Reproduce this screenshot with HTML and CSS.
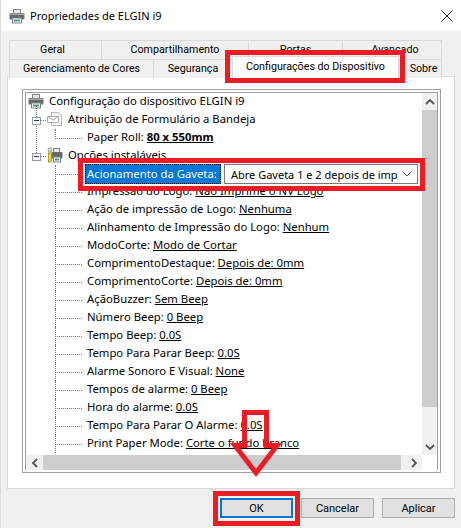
FILE: index.html
```html
<!DOCTYPE html>
<html lang="pt">
<head>
<meta charset="utf-8">
<title>Propriedades de ELGIN i9</title>
<link rel="stylesheet" href="styles.css">
</head>
<body>
<div class="window">
  <header class="titlebar">
    <svg class="printer title-icon" viewBox="0 0 16 16"><rect x="4.500" y="1.500" width="7" height="4" fill="#e8e8e8" stroke="#808080"/><rect x="0.500" y="5" width="15" height="6.500" rx="1" fill="#6a6a6a"/><rect x="1" y="5.500" width="14" height="1.500" fill="#a5a5a5"/><rect x="3.500" y="10" width="9" height="5" fill="#fff" stroke="#808080"/><rect x="5" y="11.500" width="3" height="2" fill="#1f9fd0"/><rect x="8" y="11.500" width="3" height="2" fill="#39b54a"/></svg>
    <span class="title">Propriedades de ELGIN i9</span>
    <svg class="close" viewBox="0 0 12 12"><path d="M.5.5l11 11M11.500.5l-11 11" stroke="#222" fill="none"/></svg>
  </header>
  <main class="dialog">
    <div class="tabs">
      <div class="tabrow row-top">
        <div class="tab first">Geral</div><div class="tab">Compartilhamento</div><div class="tab">Portas</div><div class="tab far">Avançado</div>
      </div>
      <div class="tabrow row-bottom">
        <div class="tab">Gerenciamento de Cores</div><div class="tab">Segurança</div><div class="tab active">Configurações do Dispositivo</div><div class="tab far">Sobre</div>
      </div>
    </div>
    <section class="panel">
      <div class="frame">
        <div class="inner">
          <div class="tree">
            <div class="row lvl0">
              <svg class="printer node-icon" viewBox="0 0 16 16"><rect x="4.500" y="1.500" width="7" height="4" fill="#e8e8e8" stroke="#808080"/><rect x="0.500" y="5" width="15" height="6.500" rx="1" fill="#6a6a6a"/><rect x="1" y="5.500" width="14" height="1.500" fill="#a5a5a5"/><rect x="3.500" y="10" width="9" height="5" fill="#fff" stroke="#808080"/><rect x="5" y="11.500" width="3" height="2" fill="#1f9fd0"/><rect x="8" y="11.500" width="3" height="2" fill="#39b54a"/></svg>
              <span>Configuração do dispositivo ELGIN i9</span>
            </div>
            <div class="row lvl1 branch-form">
              <span class="toggle"></span>
              <svg class="node-icon" viewBox="0 0 16 16"><path d="M4.500 1.500h7l3 3v10h-10z" fill="#fbfbfb" stroke="#b5b5b5"/><path d="M.5 5.500h11v6H.5z" fill="#fff" stroke="#aaa"/><path d="M.5 5.500l5.500 3.500 5.500-3.500" fill="none" stroke="#aaa"/></svg>
              <span>Atribuição de Formulário a Bandeja</span>
            </div>
            <div class="row lvl2 last-form"><span>Paper Roll: <b class="val">80 x 550mm</b></span></div>
            <div class="row lvl1 branch-opt">
              <span class="toggle"></span>
              <svg class="node-icon" viewBox="0 0 16 16"><rect x="6.500" y="1.500" width="6" height="4" fill="#e8e8e8" stroke="#808080"/><rect x="4.500" y="5" width="11" height="6.500" rx="1" fill="#6a6a6a"/><rect x="6.500" y="10" width="7" height="5" fill="#fff" stroke="#808080"/><rect x="8" y="11.500" width="2" height="2" fill="#1f9fd0"/><rect x="10" y="11.500" width="2" height="2" fill="#39b54a"/><rect x="1.500" y="6" width="3" height="9" fill="#f2df2a" stroke="#8a7d10" stroke-width=".7"/><circle cx="3" cy="3" r="2" fill="#e5d9b0" stroke="#777" stroke-width=".7"/></svg>
              <span>Opções instaláveis</span>
            </div>
            <div class="row lvl2 opt">
              <span class="selected">Acionamento da Gaveta:</span>
              <div class="combo"><span class="combo-text">Abre Gaveta 1 e 2 depois de imp</span><svg class="chev" viewBox="0 0 10 6"><path d="M.5.5L5 5 9.500.5" fill="none" stroke="#555"/></svg></div>
            </div>
            <div class="row lvl2 opt"><span>Impressão do Logo: <u>Não Imprime o NV Logo</u></span></div>
            <div class="row lvl2 opt"><span>Ação de impressão de Logo: <u>Nenhuma</u></span></div>
            <div class="row lvl2 opt"><span>Alinhamento de Impressão do Logo: <u>Nenhum</u></span></div>
            <div class="row lvl2 opt"><span>ModoCorte: <u>Modo de Cortar</u></span></div>
            <div class="row lvl2 opt"><span>ComprimentoDestaque: <u>Depois de: 0mm</u></span></div>
            <div class="row lvl2 opt"><span>ComprimentoCorte: <u>Depois de: 0mm</u></span></div>
            <div class="row lvl2 opt"><span>AçãoBuzzer: <u>Sem Beep</u></span></div>
            <div class="row lvl2 opt"><span>Número Beep: <u>0 Beep</u></span></div>
            <div class="row lvl2 opt"><span>Tempo Beep: <u>0.0S</u></span></div>
            <div class="row lvl2 opt"><span>Tempo Para Parar Beep: <u>0.0S</u></span></div>
            <div class="row lvl2 opt"><span>Alarme Sonoro E Visual: <u>None</u></span></div>
            <div class="row lvl2 opt"><span>Tempos de alarme: <u>0 Beep</u></span></div>
            <div class="row lvl2 opt"><span>Hora do alarme: <u>0.0S</u></span></div>
            <div class="row lvl2 opt"><span>Tempo Para Parar O Alarme: <u>0.0S</u></span></div>
            <div class="row lvl2 opt"><span>Print Paper Mode: <u>Corte o fundo branco</u></span></div>
          </div>
          <div class="vscroll">
            <div class="sbtn"><svg class="arrow" viewBox="0 0 10 6"><path d="M1 5l4-4 4 4" fill="none" stroke="#555" stroke-width="1.800"/></svg></div>
            <div class="vthumb"></div>
            <div class="vrest"></div>
            <div class="sbtn"><svg class="arrow" viewBox="0 0 10 6"><path d="M1 1l4 4 4-4" fill="none" stroke="#555" stroke-width="1.800"/></svg></div>
          </div>
          <div class="hscroll">
            <div class="sbtn"><svg class="arrow" viewBox="0 0 6 10"><path d="M5 1L1 5l4 4" fill="none" stroke="#555" stroke-width="1.800"/></svg></div>
            <div class="hthumb"></div>
            <div class="hrest"></div>
            <div class="sbtn"><svg class="arrow" viewBox="0 0 6 10"><path d="M1 1l4 4-4 4" fill="none" stroke="#555" stroke-width="1.800"/></svg></div>
          </div>
          <div class="corner"></div>
        </div>
      </div>
    </section>
    <footer class="buttons">
      <button class="btn default">OK</button>
      <button class="btn">Cancelar</button>
      <button class="btn">Aplicar</button>
    </footer>
  </main>
  <div class="mark mark-tab"></div>
  <div class="mark mark-combo"></div>
  <div class="mark mark-ok"></div>
  <svg class="mark-arrow" viewBox="0 0 461 528"><polygon points="244.500,412.500 266.500,412.500 266.500,445.500 277,445.500 256,473 235,445.500 244.500,445.500" fill="none" stroke="#ed1c24" stroke-width="5"/></svg>
</div>
</body>
</html>
```
FILE: styles.css
```css
* { box-sizing: border-box; }
html, body { margin: 0; padding: 0; }
body { font-family: "Noto Sans", sans-serif; font-size: 11.3px; color: #000; background: #f0f0f0; }
.window { position: relative; width: 461px; height: 528px; overflow: hidden; border-left: 1px solid #dcdcdc; }
.titlebar { height: 31px; background: #fff; display: flex; align-items: center; padding: 0 8px; }
.title-icon { width: 16px; height: 16px; flex: none; }
.title { margin-left: 5px; font-size: 11px; flex: 1; }
.close { width: 12px; height: 12px; }
.dialog { padding: 9px 6px 0; }
.tabs { padding-left: 2px; width: 435px; font-family: Roboto, sans-serif; font-size: 10.7px; }
.tabrow { display: grid; height: 18px; }
.row-top { grid-template-columns: 92px 147px 94px 100px; height: 19px; }
.row-bottom { grid-template-columns: 144px 79px 167px 43px; }
.tab { border: 1px solid #d9d9d9; border-right: 0; border-bottom: 0; background: #f0f0f0; display: flex; align-items: center; justify-content: center; white-space: nowrap; padding-bottom: 1px; }
.tab:last-child { border-right: 1px solid #d9d9d9; }
.first { padding-right: 6px; }
.far { padding-left: 6px; }
.active { background: #fff; margin-top: -3px; height: 22px; position: relative; border-right: 1px solid #d9d9d9; padding-bottom: 2px; }
.panel { height: 413px; background: #fff; border: 1px solid #d9d9d9; padding: 12px 13px 0 14px; margin-top: -1px; }
.frame { height: 384px; border: 1px solid #a0a0a0; padding: 2px; }
.inner { height: 378px; border: 1px solid #a0a0a0; background: #fff; display: grid; grid-template-columns: 396px 15px; grid-template-rows: 362px 15px; }
.tree { overflow: hidden; background: #fff; }
.row { position: relative; height: 18px; padding-bottom: 3px; display: flex; align-items: center; white-space: nowrap; }
.lvl0 { padding-left: 2px; }
.lvl1 { padding-left: 21px; }
.lvl2 { padding-left: 61px; }
.node-icon { width: 16px; height: 16px; flex: none; margin-right: 5px; }
.toggle { position: absolute; left: 6px; top: 6px; width: 9px; height: 8px; border: 1px solid #8f9bb0; background: #fff; z-index: 1; }
.toggle::after { content: ""; position: absolute; left: 1px; top: 2px; width: 5px; height: 1px; background: #1f3a6e; }
.lvl1::before { content: ""; position: absolute; left: 10px; top: -6px; height: 18px; border-left: 1px dotted #777; }
.lvl1::after { content: ""; position: absolute; left: 10px; width: 10px; top: 9px; border-top: 1px dotted #777; }
.branch-opt::before { top: -24px; height: 36px; }
.lvl2::before { content: ""; position: absolute; left: 29px; top: 0; height: 18px; border-left: 1px dotted #777; }
.lvl2::after { content: ""; position: absolute; left: 29px; width: 27px; top: 9px; border-top: 1px dotted #777; }
.last-form::before { height: 10px; }
.val { font-weight: 700; text-decoration: underline; }
.selected { background: #0078d7; color: #fff; outline: 1px dotted #111; outline-offset: -1px; height: 20px; line-height: 19px; padding: 0 3px 0 2px; margin: 3px 0 0 -2px; width: 136px; flex: none; }
.combo { margin: 3px 0 0 3px; width: 194px; height: 20px; border: 1px solid #7a7a7a; background: #fff; display: flex; align-items: center; padding: 0 5px 0 6px; justify-content: space-between; font-size: 11px; }
.chev { width: 10px; height: 6px; }
.vscroll { grid-column: 2; grid-row: 1; background: #f0f0f0; display: flex; flex-direction: column; }
.hscroll { grid-column: 1; grid-row: 2; background: #f0f0f0; display: flex; }
.corner { background: #fff; }
.sbtn { flex: none; width: 15px; height: 15px; display: flex; align-items: center; justify-content: center; }
.vscroll .sbtn { height: 17px; }
.hscroll .sbtn { width: 17px; }
.arrow { width: 10px; height: 6px; }
.hscroll .arrow { width: 6px; height: 10px; }
.vthumb { height: 297px; background: #cdcdcd; flex: none; }
.vrest { flex: 1; }
.hthumb { width: 358px; background: #cdcdcd; flex: none; }
.hrest { flex: 1; }
.buttons { display: flex; gap: 8px; justify-content: flex-end; padding-top: 9px; }
.btn { width: 73px; height: 20px; padding: 0; font-family: Roboto, sans-serif; font-size: 11px; background: #e1e1e1; border: 1px solid #adadad; color: #000; }
.default { border: 2px solid #0078d7; }
.mark { position: absolute; border: 5px solid #ed1c24; }
.mark-tab { left: 224px; top: 50px; width: 180px; height: 33px; }
.mark-combo { left: 77px; top: 158px; width: 347px; height: 33px; }
.mark-ok { left: 212px; top: 491px; width: 87px; height: 35px; }
.mark-arrow { position: absolute; left: -1px; top: 0; width: 461px; height: 528px; pointer-events: none; }
```
